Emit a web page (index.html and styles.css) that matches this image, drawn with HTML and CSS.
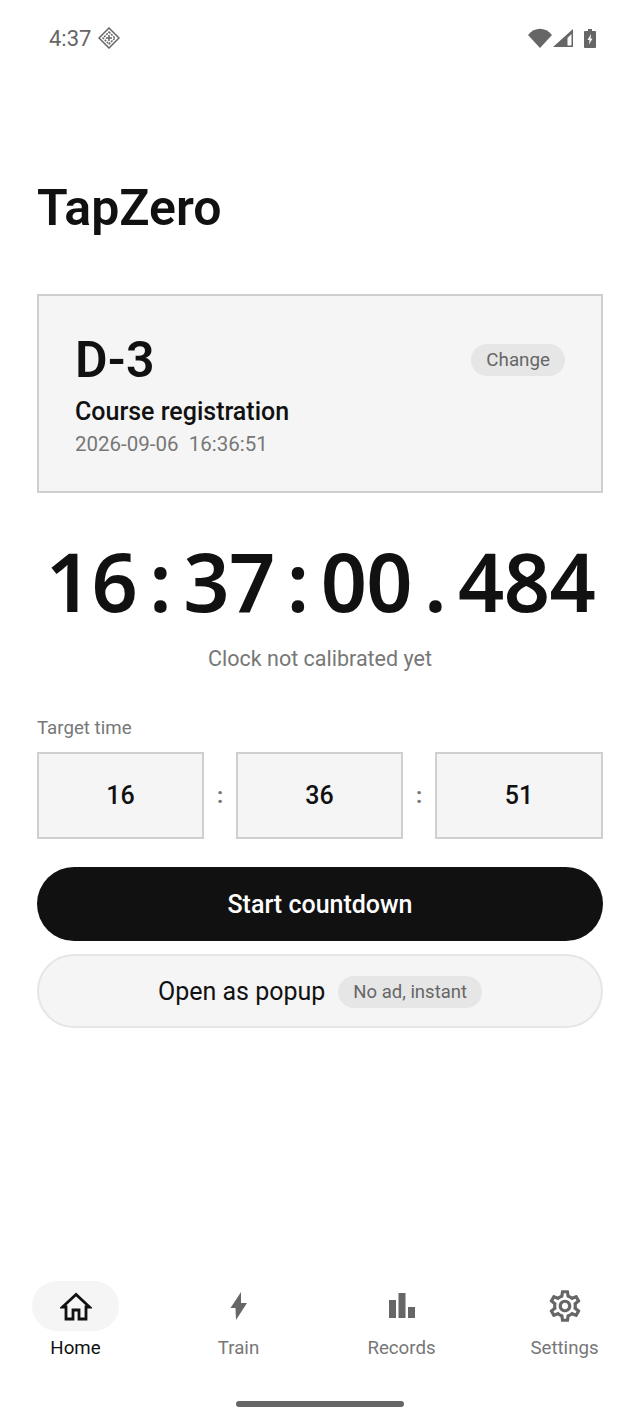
FILE: index.html
```html
<!DOCTYPE html>
<html lang="en">
<head>
<meta charset="utf-8">
<title>TapZero</title>
<link rel="stylesheet" href="styles.css">
</head>
<body>
<div class="screen">
  <header class="status">
    <div class="status-left">
      <span class="status-time">4:37</span>
      <svg class="status-badge" viewBox="0 0 22 22" width="22" height="22"><path d="M11 1 21 11 11 21 1 11Z" fill="none" stroke="#666" stroke-width="1.5"/><path d="M11 5 17 11 11 17 5 11Z" fill="none" stroke="#666" stroke-width="1.5" stroke-dasharray="2 1"/><path d="M8 11h6M11 8v6" stroke="#666" stroke-width="1.5"/></svg>
    </div>
    <div class="status-right">
      <svg class="icon-wifi" viewBox="0 0 24 20" width="24" height="20"><path d="M0 7C7-1.500 17-1.500 24 7L12 20Z" fill="#666"/></svg>
      <svg class="icon-signal" viewBox="0 0 20 18" width="20" height="18"><path d="M20 0V18H0Z" fill="#666"/><path d="M18.500 5V16.500H14.500V9Z" fill="#fff"/></svg>
      <svg class="icon-battery" viewBox="0 0 12 19" width="12" height="19"><path d="M4 0H8V2H11A1 1 0 0 1 12 3V18A1 1 0 0 1 11 19H1A1 1 0 0 1 0 18V3A1 1 0 0 1 1 2H4Z" fill="#666"/><path d="M7 5 3.500 11H5.500L5 15.500 8.500 9.500H6.500Z" fill="#fff"/></svg>
    </div>
  </header>

  <main class="content">
    <h1 class="title">TapZero</h1>

    <section class="card">
      <div class="card-top">
        <span class="dday">D-3</span>
        <span class="pill pill-change">Change</span>
      </div>
      <div class="card-name">Course registration</div>
      <div class="card-date">2026-09-06&nbsp; 16:36:51</div>
    </section>

    <div class="clock">16<span class="sep">:</span>37<span class="sep">:</span>00<span class="sep">.</span>484</div>
    <p class="clock-note">Clock not calibrated yet</p>

    <div class="target-label">Target time</div>
    <div class="target-row">
      <div class="field">16</div>
      <span class="colon">:</span>
      <div class="field">36</div>
      <span class="colon">:</span>
      <div class="field">51</div>
    </div>

    <button class="btn btn-primary">Start countdown</button>
    <button class="btn btn-secondary">Open as popup <span class="pill pill-inline">No ad, instant</span></button>
  </main>

  <nav class="tabs">
    <div class="tab tab-active">
      <span class="tab-icon">
        <svg viewBox="0 0 32 32" width="32" height="32"><path d="M16 4.500 2.500 17H6V29H13V20H19V29H26V17H29.500Z" fill="none" stroke="#111" stroke-width="2.800" stroke-linejoin="miter"/></svg>
      </span>
      <span class="tab-label">Home</span>
    </div>
    <div class="tab">
      <span class="tab-icon">
        <svg viewBox="0 0 28 28" width="28" height="28"><path d="M16 0 5.500 16H10.500L11 28 22 11H16Z" fill="#666"/></svg>
      </span>
      <span class="tab-label">Train</span>
    </div>
    <div class="tab">
      <span class="tab-icon">
        <svg viewBox="0 0 28 28" width="28" height="28"><path d="M1 8H8V26H1ZM10.500 1H17.500V26H10.500ZM20 15H27V26H20Z" fill="#666"/></svg>
      </span>
      <span class="tab-label">Records</span>
    </div>
    <div class="tab">
      <span class="tab-icon">
        <svg viewBox="0 0 24 24" width="38" height="38"><path fill="#666" d="M19.430 12.980c.04-.32.07-.64.07-.98s-.03-.66-.07-.98l2.110-1.650c.19-.15.24-.42.12-.64l-2-3.460c-.12-.22-.39-.3-.61-.22l-2.490 1c-.52-.4-1.080-.73-1.690-.98l-.38-2.650A.488.488 0 0 0 14 2h-4c-.25 0-.46.18-.49.42l-.38 2.650c-.61.25-1.170.59-1.690.98l-2.490-1a.566.566 0 0 0-.18-.03c-.17 0-.34.09-.43.25l-2 3.460c-.13.22-.07.49.12.64l2.110 1.650c-.04.32-.07.65-.07.98s.03.66.07.98l-2.110 1.650c-.19.15-.24.42-.12.64l2 3.460c.12.22.39.3.61.22l2.490-1c.52.4 1.080.73 1.690.98l.38 2.650c.03.24.24.42.49.42h4c.25 0 .46-.18.49-.42l.38-2.650c.61-.25 1.170-.59 1.690-.98l2.490 1c.06.02.12.03.18.03.17 0 .34-.09.43-.25l2-3.460c.12-.22.07-.49-.12-.64l-2.110-1.650zm-1.980-1.710c.04.31.05.52.05.73 0 .21-.02.43-.05.73l-.14 1.130.89.7 1.080.84-.7 1.210-1.270-.51-1.040-.42-.9.68c-.43.32-.84.56-1.250.73l-1.060.43-.16 1.130-.2 1.350h-1.400l-.19-1.350-.16-1.130-1.060-.43c-.43-.18-.83-.41-1.230-.71l-.91-.7-1.060.43-1.270.51-.7-1.210 1.080-.84.89-.7-.14-1.130c-.03-.31-.05-.54-.05-.74s.02-.43.05-.73l.14-1.130-.89-.7-1.080-.84.7-1.210 1.270.51 1.040.42.9-.68c.43-.32.84-.56 1.250-.73l1.060-.43.16-1.130.2-1.350h1.390l.19 1.350.16 1.130 1.060.43c.43.18.83.41 1.230.71l.91.7 1.060-.43 1.270-.51.7 1.210-1.070.85-.89.7.14 1.130zM12 8c-2.210 0-4 1.790-4 4s1.790 4 4 4 4-1.790 4-4-1.790-4-4-4zm0 6c-1.100 0-2-.9-2-2s.9-2 2-2 2 .9 2 2-.9 2-2 2z"/></svg>
      </span>
      <span class="tab-label">Settings</span>
    </div>
  </nav>
  <div class="home-area"><div class="home-bar"></div></div>
</div>
</body>
</html>
```
FILE: styles.css
```css
* { box-sizing: border-box; }
html, body { margin: 0; padding: 0; background: #fff; }
body { font-family: Roboto, "Noto Sans", sans-serif; color: #111; }
.screen { width: 640px; height: 1422px; display: flex; flex-direction: column; overflow: hidden; }

.status { height: 76px; padding: 0 44px 0 49px; display: flex; justify-content: space-between; align-items: center; flex: none; }
.status-left { display: flex; align-items: center; gap: 7px; color: #666; font-size: 22px; }
.status-badge { display: block; }
.status-right { display: flex; align-items: center; }
.status-right svg { display: block; flex: none; }
.icon-signal { margin-left: 1px; margin-right: 11px; }

.content { flex: 1; padding: 0 37px; display: flex; flex-direction: column; }
.title { margin: 102px 0 0; height: 60px; font-size: 50px; line-height: 60px; font-weight: 600; color: #111; }

.card { margin-top: 56px; height: 199px; background: #f5f5f5; border: 2px solid #cfcfcf; padding: 36px 36px 0; }
.card-top { display: flex; justify-content: space-between; align-items: center; height: 56px; }
.dday { font-size: 50px; line-height: 56px; font-weight: 600; }
.pill { display: inline-block; background: #e6e6e6; color: #666; border-radius: 16px; line-height: 32px; padding: 0 15px; font-weight: 400; }
.pill-change { font-size: 18.800px; }
.card-name { margin-top: 8px; font-size: 25px; line-height: 32px; font-weight: 500; color: #111; }
.card-date { margin-top: 1px; font-size: 20.500px; line-height: 30px; color: #777; font-weight: 400; }

.clock { margin-top: 33px; padding-left: 1px; text-align: center; font-family: "Noto Sans", Roboto, sans-serif; font-size: 81px; line-height: 110px; font-weight: 600; letter-spacing: -0.6px; white-space: nowrap; color: #111; }
.sep { display: inline-block; width: 46px; text-align: center; }
.clock-note { margin: 8px 0 0; text-align: center; font-size: 21.500px; line-height: 30px; color: #777; font-weight: 400; }

.target-label { margin-top: 41px; font-size: 18.700px; line-height: 26px; color: #777; font-weight: 400; }
.target-row { margin-top: 11px; display: grid; grid-template-columns: 167px 32px 167px 32px 168px; align-items: center; }
.field { height: 87px; background: #f5f5f5; border: 2px solid #cfcfcf; display: flex; align-items: center; justify-content: center; font-size: 25px; font-weight: 500; color: #111; }
.colon { text-align: center; font-size: 22px; color: #777; font-weight: 700; }

.btn { display: flex; width: 100%; align-items: center; justify-content: center; height: 74px; border-radius: 37px; font-family: inherit; font-size: 25px; font-weight: 500; padding: 1px 0 0; }
.btn-primary { margin-top: 28px; background: #111; color: #fff; border: 0; }
.btn-secondary { margin-top: 13px; background: #f5f5f5; color: #111; border: 2px solid #e6e6e6; gap: 13px; font-weight: 400; }
.pill-inline { font-size: 18.500px; }

.tabs { flex: none; display: grid; grid-template-columns: repeat(4, 1fr); height: 100px; margin: 0 -6px; }
.tab { display: flex; flex-direction: column; align-items: center; color: #777; }
.tab-icon { width: 87px; height: 50px; border-radius: 25px; display: flex; align-items: center; justify-content: center; }
.tab-active .tab-icon { background: #f5f5f5; }
.tab-label { margin-top: 4px; font-size: 18.700px; line-height: 26px; font-weight: 400; }
.tab-active .tab-label { color: #111; }
.home-area { flex: none; height: 41px; display: flex; justify-content: center; padding-top: 20px; }
.home-bar { width: 168px; height: 6px; border-radius: 3px; background: #666; }
```
